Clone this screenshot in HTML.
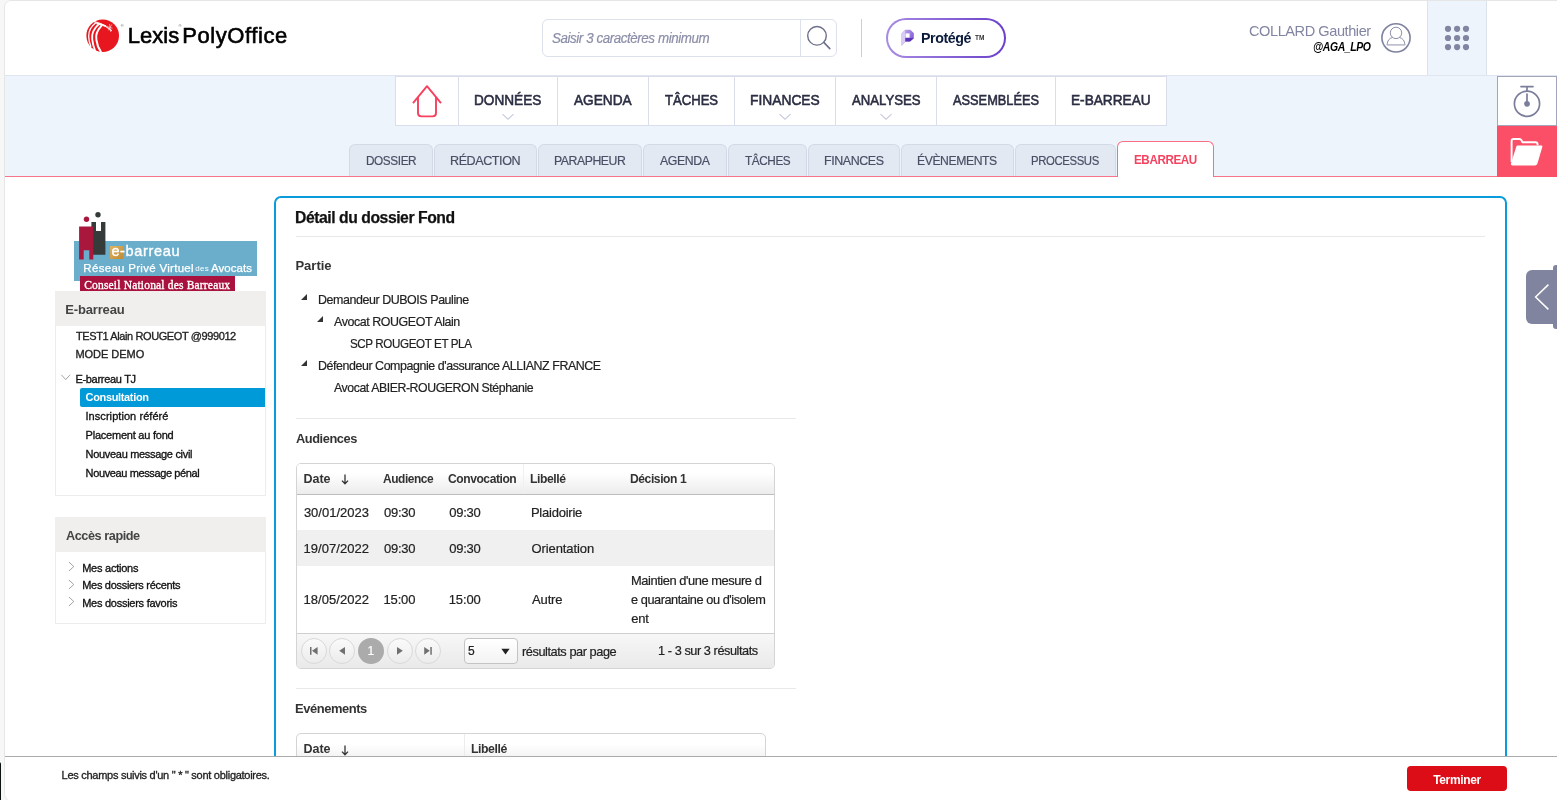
<!DOCTYPE html>
<html lang="fr"><head><meta charset="utf-8"><title>Lexis PolyOffice</title>
<style>
html,body{margin:0;padding:0;}
body{will-change:transform;width:1557px;height:800px;overflow:hidden;position:relative;background:#f7f7f7;font-family:"Liberation Sans",sans-serif;}
.a{position:absolute;box-sizing:border-box;}
.t{position:absolute;white-space:nowrap;line-height:20px;display:inline-block;transform-origin:0 50%;}
svg{position:absolute;overflow:visible;}
.tab{position:absolute;box-sizing:border-box;top:144px;height:32px;background:#e2e9f2;border:1px solid #d3dae6;border-bottom:none;border-radius:6px 6px 0 0;}
.sep{position:absolute;top:77px;width:1px;height:48px;background:#d9deea;}
.pg{position:absolute;box-sizing:border-box;width:26px;height:26px;top:638px;border-radius:13px;border:1px solid #d9d9d9;background:linear-gradient(#fafafa,#ececec);}

</style></head>
<body>
<div class="a" style="left:4px;top:0;width:1570px;height:803px;background:#fff;border:1px solid #e6e6e6;border-radius:7px 7px 7px 10px;"></div>
<div class="a" style="left:5px;top:75px;width:1552px;height:102px;background:#eef4fc;border-top:1px solid #e1e5ef;"></div>
<div class="a" style="left:5px;top:176px;width:1552px;height:1px;background:#f8748a;"></div>
<svg style="left:85px;top:18px" width="36" height="36" viewBox="0 0 36 36">
<circle cx="17.7" cy="17.7" r="16.3" fill="#e8171f"/>
<g fill="none" stroke="#fff" stroke-linecap="round">
<path d="M10.8 4.8 C6.5 8 3.6 13 3.7 18.5 C3.8 22 4.4 25 5.8 28.4" stroke-width="1.3"/>
<path d="M13.6 6.4 C9 10.5 6.6 16 7.2 21 C7.6 25.5 8.6 29 10.2 33" stroke-width="1.9"/>
<path d="M16.8 7.4 C12.5 12 10.5 18 11.4 22 C12 26.5 13.4 30.2 15.8 33.6" stroke-width="2"/>
<path d="M8.6 3.4 C13 4.6 17 6 20.4 8" stroke-width="1.1" opacity=".9"/>
<path d="M12 5.6 C15 6 18 6.8 20.4 8" stroke-width="1.6"/>
<path d="M19.6 7.6 L26.4 12.6" stroke-width="1.3" opacity=".85"/>
<path d="M24.6 6.4 L25.6 13.6 M22.4 8.6 L27.2 10.2 M26.6 6.8 L23.6 12" stroke-width="0.7" opacity=".75"/>
</g>
</svg>
<span class="t" style="left:127.70px;letter-spacing:0.060px;top:26.18px;font-size:22px;font-weight:400;color:#000;-webkit-text-stroke:0.6px #000;">Lexis</span>
<span class="t" style="left:182.20px;letter-spacing:0.580px;top:26.18px;font-size:22px;font-weight:400;color:#000;-webkit-text-stroke:0.6px #000;">PolyOffice</span>
<span class="t" style="left:120.74px;top:16.11px;font-size:4px;font-weight:400;color:#555;">®</span>
<span class="t" style="left:178.54px;top:16.11px;font-size:4px;font-weight:400;color:#555;">®</span>
<div class="a" style="left:542px;top:19px;width:295px;height:38px;border:1px solid #dde1ec;border-radius:6px;background:#fff;"></div>
<div class="a" style="left:800px;top:20px;width:1px;height:36px;background:#dde1ec;"></div>
<span class="t" style="left:552.22px;letter-spacing:-0.450px;transform:scaleX(0.9557);top:28.15px;font-size:14px;font-weight:400;color:#8b8ea8;font-style:italic;-webkit-text-stroke:0.2px #8b8ea8;">Saisir 3 caractères minimum</span>
<svg style="left:804px;top:23px" width="30" height="30" viewBox="0 0 30 30"><circle cx="13" cy="12.8" r="9.3" fill="none" stroke="#6d7089" stroke-width="1.4"/><path d="M19.8 19.4 L25.8 25.6" stroke="#6d7089" stroke-width="1.6" stroke-linecap="round"/></svg>
<div class="a" style="left:861px;top:19px;width:1px;height:38px;background:#c9cde0;"></div>
<div class="a" style="left:886px;top:18px;width:120px;height:40px;border-radius:20px;background:linear-gradient(90deg,#a78be3,#6a3fca);"></div>
<div class="a" style="left:888px;top:20px;width:116px;height:36px;border-radius:18px;background:#fff;"></div>
<svg style="left:901px;top:29px" width="14" height="18" viewBox="0 0 14 18">
<defs><linearGradient id="pg1" x1="0" y1="0" x2="1" y2="1"><stop offset="0" stop-color="#c9b3f2"/><stop offset="1" stop-color="#6a3fca"/></linearGradient></defs>
<path d="M0.5 4.2 L4.2 0.7 H9.3 L12.8 4 V9.2 L9 12.6 H4.6 L0.6 16.8 Z" fill="url(#pg1)"/>
<path d="M0.5 4.2 L4.2 0.7 V12.9 L0.6 16.8 Z" fill="#d9cbf6"/>
<path d="M4.4 9 H9 L12.8 9.2 L9 12.6 H4.4 Z" fill="#5a32b8"/>
<rect x="4.6" y="4.4" width="4" height="4.2" fill="#fff"/></svg>
<span class="t" style="left:921.25px;letter-spacing:-0.450px;transform:scaleX(0.9488);top:27.70px;font-size:15px;font-weight:700;color:#0b1b3b;">Protégé</span>
<span class="t" style="left:974.93px;letter-spacing:0.117px;top:27.65px;font-size:6.5px;font-weight:700;color:#333;">TM</span>
<span class="t" style="left:1248.86px;letter-spacing:-0.450px;transform:scaleX(0.9711);top:21.00px;font-size:15px;font-weight:400;color:#8285a1;">COLLARD Gauthier</span>
<span class="t" style="left:1313.04px;letter-spacing:-0.450px;transform:scaleX(0.8704);top:36.84px;font-size:12px;font-weight:700;color:#000;font-style:italic;">@AGA_LPO</span>
<svg style="left:1380px;top:22px" width="32" height="32" viewBox="0 0 32 32"><g fill="none" stroke="#7f829e">
<circle cx="16" cy="15.85" r="14.1" stroke-width="1.6"/>
<circle cx="16" cy="10.9" r="5.7" stroke-width="0.9"/>
<path d="M12.4 15.5 C9 16.4 7.3 18.8 7.1 22.8 M24.9 22.8 C24.7 18.8 23 16.4 19.6 15.5" stroke-width="0.9"/>
<path d="M6.8 22.9 H25.2" stroke-width="1.3" stroke="#a9abc0"/></g></svg>
<div class="a" style="left:1427px;top:1px;width:60px;height:74px;background:#eef4fc;border-left:1px solid #dde1ec;border-right:1px solid #dde1ec;"></div>
<svg style="left:0;top:0" width="1557" height="80" fill="#8285a1"><circle cx="1448" cy="28.8" r="3.1"/><circle cx="1457.1" cy="28.8" r="3.1"/><circle cx="1466" cy="28.8" r="3.1"/><circle cx="1448" cy="38" r="3.1"/><circle cx="1457.1" cy="38" r="3.1"/><circle cx="1466" cy="38" r="3.1"/><circle cx="1448" cy="47.1" r="3.1"/><circle cx="1457.1" cy="47.1" r="3.1"/><circle cx="1466" cy="47.1" r="3.1"/></svg>
<div class="a" style="left:395px;top:76px;width:772px;height:50px;background:#fff;border:1px solid #d9deea;"></div>
<div class="sep" style="left:458px"></div>
<div class="sep" style="left:557px"></div>
<div class="sep" style="left:648px"></div>
<div class="sep" style="left:734px"></div>
<div class="sep" style="left:835px"></div>
<div class="sep" style="left:936px"></div>
<div class="sep" style="left:1055px"></div>
<svg style="left:410px;top:83px" width="34" height="36" viewBox="0 0 34 36"><path d="M3 20.2 L17 3.2 L31 20.2 M8 14.4 V30 Q8 33.4 11.4 33.4 H22.6 Q26 33.4 26 30 V14.4" fill="none" stroke="#f5425f" stroke-width="1.9" stroke-linecap="butt" stroke-linejoin="round"/></svg>
<span class="t" style="left:473.68px;transform:scaleX(0.8846);top:90.46px;font-size:15.4px;font-weight:400;color:#2b2e42;-webkit-text-stroke:0.6px #2b2e42;">DONNÉES</span>
<span class="t" style="left:573.97px;transform:scaleX(0.8870);top:90.46px;font-size:15.4px;font-weight:400;color:#2b2e42;-webkit-text-stroke:0.6px #2b2e42;">AGENDA</span>
<span class="t" style="left:665.31px;transform:scaleX(0.8504);top:90.46px;font-size:15.4px;font-weight:400;color:#2b2e42;-webkit-text-stroke:0.6px #2b2e42;">TÂCHES</span>
<span class="t" style="left:749.87px;transform:scaleX(0.8964);top:90.46px;font-size:15.4px;font-weight:400;color:#2b2e42;-webkit-text-stroke:0.6px #2b2e42;">FINANCES</span>
<span class="t" style="left:851.97px;transform:scaleX(0.8566);top:90.46px;font-size:15.4px;font-weight:400;color:#2b2e42;-webkit-text-stroke:0.6px #2b2e42;">ANALYSES</span>
<span class="t" style="left:953.47px;transform:scaleX(0.8319);top:90.46px;font-size:15.4px;font-weight:400;color:#2b2e42;-webkit-text-stroke:0.6px #2b2e42;">ASSEMBLÉES</span>
<span class="t" style="left:1071.38px;transform:scaleX(0.8873);top:90.46px;font-size:15.4px;font-weight:400;color:#2b2e42;-webkit-text-stroke:0.6px #2b2e42;">E-BARREAU</span>
<svg style="left:500.5px;top:113px" width="14" height="8" viewBox="0 0 14 8"><path d="M1.5 1.2 L7 6.2 L12.5 1.2" fill="none" stroke="#c6cadd" stroke-width="1.1"/></svg>
<svg style="left:777.5px;top:113px" width="14" height="8" viewBox="0 0 14 8"><path d="M1.5 1.2 L7 6.2 L12.5 1.2" fill="none" stroke="#c6cadd" stroke-width="1.1"/></svg>
<svg style="left:878.5px;top:113px" width="14" height="8" viewBox="0 0 14 8"><path d="M1.5 1.2 L7 6.2 L12.5 1.2" fill="none" stroke="#c6cadd" stroke-width="1.1"/></svg>
<div class="tab" style="left:349px;width:84px"></div>
<span class="t" style="left:365.63px;letter-spacing:-0.450px;transform:scaleX(0.9068);top:150.80px;font-size:13px;font-weight:400;color:#4b4e65;-webkit-text-stroke:0.2px #4b4e65;">DOSSIER</span>
<div class="tab" style="left:434px;width:103px"></div>
<span class="t" style="left:450.27px;letter-spacing:-0.450px;transform:scaleX(0.9670);top:150.80px;font-size:13px;font-weight:400;color:#4b4e65;-webkit-text-stroke:0.2px #4b4e65;">RÉDACTION</span>
<div class="tab" style="left:538px;width:104px"></div>
<span class="t" style="left:554.00px;letter-spacing:-0.450px;transform:scaleX(0.9413);top:150.80px;font-size:13px;font-weight:400;color:#4b4e65;-webkit-text-stroke:0.2px #4b4e65;">PARAPHEUR</span>
<div class="tab" style="left:643px;width:84px"></div>
<span class="t" style="left:660.18px;letter-spacing:-0.450px;transform:scaleX(0.9467);top:150.80px;font-size:13px;font-weight:400;color:#4b4e65;-webkit-text-stroke:0.2px #4b4e65;">AGENDA</span>
<div class="tab" style="left:728px;width:79px"></div>
<span class="t" style="left:744.94px;letter-spacing:-0.450px;transform:scaleX(0.9053);top:150.80px;font-size:13px;font-weight:400;color:#4b4e65;-webkit-text-stroke:0.2px #4b4e65;">TÂCHES</span>
<div class="tab" style="left:808px;width:92px"></div>
<span class="t" style="left:823.78px;letter-spacing:-0.450px;transform:scaleX(0.9586);top:150.80px;font-size:13px;font-weight:400;color:#4b4e65;-webkit-text-stroke:0.2px #4b4e65;">FINANCES</span>
<div class="tab" style="left:901px;width:113px"></div>
<span class="t" style="left:917.20px;letter-spacing:-0.450px;transform:scaleX(0.9372);top:150.80px;font-size:13px;font-weight:400;color:#4b4e65;-webkit-text-stroke:0.2px #4b4e65;">ÉVÈNEMENTS</span>
<div class="tab" style="left:1015px;width:101px"></div>
<span class="t" style="left:1031.07px;letter-spacing:-0.450px;transform:scaleX(0.8746);top:150.80px;font-size:13px;font-weight:400;color:#4b4e65;-webkit-text-stroke:0.2px #4b4e65;">PROCESSUS</span>
<div class="a" style="left:1117px;top:141px;width:97px;height:36px;background:#fff;border:1px solid #fa6e84;border-bottom:none;border-radius:6px 6px 0 0;"></div>
<span class="t" style="left:1134.02px;letter-spacing:-0.450px;transform:scaleX(0.9350);top:149.67px;font-size:12.5px;font-weight:700;color:#f5425f;">EBARREAU</span>
<div class="a" style="left:1497px;top:76px;width:60px;height:50px;background:#fff;border:1px solid #a3a6bb;"></div>
<svg style="left:1510px;top:82.7px" width="34" height="38" viewBox="0 0 34 38"><g fill="none" stroke="#7b7e9a" stroke-width="1.7" stroke-linecap="round">
<circle cx="17" cy="20.8" r="12.6"/><path d="M11 3.6 H23 M17 3.6 V8 M17 11 V20"/></g><circle cx="17" cy="20.8" r="2.9" fill="#7b7e9a"/></svg>
<div class="a" style="left:1497px;top:126px;width:60px;height:51px;background:#fb4f68;"></div>
<svg style="left:1509px;top:136px" width="36" height="32" viewBox="0 0 36 32"><g fill="#fff" stroke="#fff" stroke-linejoin="round">
<path d="M2.6 26 V5 Q2.6 3 4.6 3 H10.4 Q11.8 3 12.4 4.2 L13.4 6.2 H26.4 Q28.6 6.2 28.6 8.4 V9.2" fill="none" stroke-width="1.9"/>
<path d="M8.2 10.4 H32.6 L27.6 27.4 Q27.2 28.6 26 28.6 H3.6 Q2.4 28.6 2.8 27.4 Z" stroke-width="1.6"/></g></svg>
<div class="a" style="left:74px;top:241px;width:182.5px;height:35px;background:#6baecb;"></div>
<div class="a" style="left:74px;top:270px;width:8px;height:10.5px;background:#6baecb;"></div>
<div class="a" style="left:80.3px;top:276px;width:155px;height:15px;background:#a9123f;"></div>
<svg style="left:70px;top:208px" width="45" height="56" viewBox="0 0 45 56">
<circle cx="28" cy="6.8" r="2.7" fill="#353b3b"/>
<path d="M21.4 14 H26 V23 H31 V14 H35.4 V46.7 H21.4 Z" fill="#353b3b"/>
<circle cx="16.5" cy="11.2" r="2.7" fill="#a9173d"/>
<path d="M9.1 18.6 H23.3 V51.5 H19.3 V42.3 H13.7 V51.5 H9.1 Z" fill="#a9173d"/></svg>
<div class="a" style="left:109.8px;top:246px;width:13.6px;height:13px;background:linear-gradient(135deg,#e0b565,#c08a33);"></div>
<span class="t" style="left:111.38px;letter-spacing:0.650px;top:241.18px;font-size:14.5px;font-weight:400;color:#fff;-webkit-text-stroke:0.35px #fff;">e-barreau</span>
<span class="t" style="left:83.36px;letter-spacing:0.294px;top:257.62px;font-size:11.5px;font-weight:400;color:#fff;-webkit-text-stroke:0.25px #fff;">Réseau Privé Virtuel</span>
<span class="t" style="left:195.16px;letter-spacing:0.359px;top:258.83px;font-size:8px;font-weight:400;color:#fff;">des</span>
<span class="t" style="left:210.98px;letter-spacing:0.056px;top:257.62px;font-size:11.5px;font-weight:400;color:#fff;-webkit-text-stroke:0.25px #fff;">Avocats</span>
<span class="t" style="left:84.23px;letter-spacing:0.181px;top:274.62px;font-size:11.5px;font-weight:400;color:#fff;font-family:'Liberation Serif',serif;-webkit-text-stroke:0.35px #fff;">Conseil National des Barreaux</span>
<div class="a" style="left:55px;top:291px;width:211px;height:205px;border:1px solid #ececec;border-top:none;"></div>
<div class="a" style="left:55px;top:291px;width:211px;height:35px;background:#f0efee;"></div>
<span class="t" style="left:65.33px;letter-spacing:-0.172px;top:299.70px;font-size:13px;font-weight:700;color:#444;">E-barreau</span>
<span class="t" style="left:76.05px;letter-spacing:-0.398px;top:325.99px;font-size:11px;font-weight:400;color:#222;-webkit-text-stroke:0.32px #222;">TEST1 Alain ROUGEOT @999012</span>
<span class="t" style="left:75.40px;letter-spacing:-0.017px;top:343.99px;font-size:11px;font-weight:400;color:#222;-webkit-text-stroke:0.32px #222;">MODE DEMO</span>
<svg style="left:60px;top:373px" width="12" height="8" viewBox="0 0 12 8"><path d="M1.4 1.8 L5.7 6.6 L10 1.8" fill="none" stroke="#999" stroke-width="0.9"/></svg>
<span class="t" style="left:75.40px;letter-spacing:-0.298px;top:368.69px;font-size:11px;font-weight:400;color:#111;-webkit-text-stroke:0.32px #111;">E-barreau TJ</span>
<div class="a" style="left:80px;top:388px;width:185px;height:19px;background:#009ad9;border-radius:2px 0 0 2px;"></div>
<span class="t" style="left:85.55px;letter-spacing:-0.344px;top:386.69px;font-size:11px;font-weight:700;color:#fff;">Consultation</span>
<span class="t" style="left:85.48px;letter-spacing:0.063px;top:405.69px;font-size:11px;font-weight:400;color:#111;-webkit-text-stroke:0.32px #111;">Inscription référé</span>
<span class="t" style="left:85.60px;letter-spacing:-0.226px;top:424.79px;font-size:11px;font-weight:400;color:#111;-webkit-text-stroke:0.32px #111;">Placement au fond</span>
<span class="t" style="left:85.60px;letter-spacing:-0.309px;top:443.89px;font-size:11px;font-weight:400;color:#111;-webkit-text-stroke:0.32px #111;">Nouveau message civil</span>
<span class="t" style="left:85.60px;letter-spacing:-0.378px;top:462.79px;font-size:11px;font-weight:400;color:#111;-webkit-text-stroke:0.32px #111;">Nouveau message pénal</span>
<div class="a" style="left:55px;top:517px;width:211px;height:107px;border:1px solid #ececec;border-top:none;"></div>
<div class="a" style="left:55px;top:517px;width:211px;height:35px;background:#f0efee;"></div>
<span class="t" style="left:65.88px;letter-spacing:-0.450px;transform:scaleX(0.9758);top:525.90px;font-size:13px;font-weight:700;color:#444;">Accès rapide</span>
<span class="t" style="left:82.20px;letter-spacing:-0.240px;top:557.69px;font-size:11px;font-weight:400;color:#111;-webkit-text-stroke:0.32px #111;">Mes actions</span>
<svg style="left:67px;top:561.2px" width="9" height="11" viewBox="0 0 9 11"><path d="M1.9 1 L6.8 5.5 L1.9 10" fill="none" stroke="#999" stroke-width="0.9"/></svg>
<span class="t" style="left:82.20px;letter-spacing:-0.291px;top:574.79px;font-size:11px;font-weight:400;color:#111;-webkit-text-stroke:0.32px #111;">Mes dossiers récents</span>
<svg style="left:67px;top:578.9px" width="9" height="11" viewBox="0 0 9 11"><path d="M1.9 1 L6.8 5.5 L1.9 10" fill="none" stroke="#999" stroke-width="0.9"/></svg>
<span class="t" style="left:82.20px;letter-spacing:-0.261px;top:593.19px;font-size:11px;font-weight:400;color:#111;-webkit-text-stroke:0.32px #111;">Mes dossiers favoris</span>
<svg style="left:67px;top:596.3px" width="9" height="11" viewBox="0 0 9 11"><path d="M1.9 1 L6.8 5.5 L1.9 10" fill="none" stroke="#999" stroke-width="0.9"/></svg>
<div class="a" style="left:274px;top:196px;width:1233px;height:640px;border:2px solid #0a9bdc;border-radius:7px;background:#fff;"></div>
<span class="t" style="left:295.25px;letter-spacing:-0.450px;transform:scaleX(0.9820);top:208.46px;font-size:16px;font-weight:700;color:#111;-webkit-text-stroke:0.25px #111;">Détail du dossier Fond</span>
<div class="a" style="left:296px;top:236px;width:1189px;height:1px;background:#e9e9e9;"></div>
<span class="t" style="left:295.43px;top:256.00px;font-size:13px;font-weight:700;color:#333;">Partie</span>
<span class="t" style="left:317.98px;letter-spacing:-0.450px;transform:scaleX(0.9567);top:289.60px;font-size:13px;font-weight:400;color:#222;-webkit-text-stroke:0.2px #222;">Demandeur DUBOIS Pauline</span>
<svg style="left:301.2px;top:294.40000000000003px" width="6" height="6" viewBox="0 0 6 6"><path d="M6 0 V6 H0 Z" fill="#333"/></svg>
<span class="t" style="left:334.28px;letter-spacing:-0.450px;transform:scaleX(0.9572);top:311.60px;font-size:13px;font-weight:400;color:#222;-webkit-text-stroke:0.2px #222;">Avocat ROUGEOT Alain</span>
<svg style="left:317.4px;top:316.40000000000003px" width="6" height="6" viewBox="0 0 6 6"><path d="M6 0 V6 H0 Z" fill="#333"/></svg>
<span class="t" style="left:349.67px;letter-spacing:-0.450px;transform:scaleX(0.8958);top:333.50px;font-size:13px;font-weight:400;color:#222;-webkit-text-stroke:0.2px #222;">SCP ROUGEOT ET PLA</span>
<span class="t" style="left:317.98px;letter-spacing:-0.450px;transform:scaleX(0.9548);top:355.50px;font-size:13px;font-weight:400;color:#222;-webkit-text-stroke:0.2px #222;">Défendeur Compagnie d'assurance ALLIANZ FRANCE</span>
<svg style="left:301.2px;top:360.3px" width="6" height="6" viewBox="0 0 6 6"><path d="M6 0 V6 H0 Z" fill="#333"/></svg>
<span class="t" style="left:334.28px;letter-spacing:-0.450px;transform:scaleX(0.9460);top:377.70px;font-size:13px;font-weight:400;color:#222;-webkit-text-stroke:0.2px #222;">Avocat ABIER-ROUGERON Stéphanie</span>
<div class="a" style="left:296px;top:418px;width:500px;height:1px;background:#e9e9e9;"></div>
<span class="t" style="left:295.98px;letter-spacing:-0.450px;transform:scaleX(0.9871);top:428.60px;font-size:13px;font-weight:700;color:#333;">Audiences</span>
<div class="a" style="left:296px;top:463px;width:479px;height:206px;border:1px solid #d4d4d4;border-radius:5px;background:#fff;overflow:hidden;"><div class="a" style="left:0;top:0;width:477px;height:31px;background:linear-gradient(#fff 30%,#ececec);border-bottom:1px solid #bdbdbd;"></div><div class="a" style="left:0;top:66px;width:477px;height:36px;background:#f0f0f0;"></div><div class="a" style="left:0;top:169px;width:477px;height:36px;background:linear-gradient(#f7f7f7,#e9e9e9);border-top:1px solid #cfcfcf;"></div></div>
<div class="a" style="left:523px;top:464px;width:1px;height:30px;background:#f0f0f0;"></div>
<span class="t" style="left:303.56px;letter-spacing:-0.043px;top:469.17px;font-size:12.5px;font-weight:700;color:#333;">Date</span>
<svg style="left:341px;top:473.5px" width="8" height="11" viewBox="0 0 8 11"><path d="M4 0.5 V9.6 M1 6.6 L4 9.8 L7 6.6" fill="none" stroke="#333" stroke-width="1.3"/></svg>
<span class="t" style="left:383.20px;letter-spacing:-0.450px;transform:scaleX(0.9546);top:469.17px;font-size:12.5px;font-weight:700;color:#333;">Audience</span>
<span class="t" style="left:448.21px;letter-spacing:-0.450px;transform:scaleX(0.9655);top:469.17px;font-size:12.5px;font-weight:700;color:#333;">Convocation</span>
<span class="t" style="left:530.19px;letter-spacing:-0.450px;transform:scaleX(0.9739);top:469.17px;font-size:12.5px;font-weight:700;color:#333;">Libellé</span>
<span class="t" style="left:629.89px;letter-spacing:-0.450px;transform:scaleX(0.9686);top:469.17px;font-size:12.5px;font-weight:700;color:#333;">Décision 1</span>
<span class="t" style="left:303.90px;top:502.50px;font-size:13px;font-weight:400;color:#222;-webkit-text-stroke:0.2px #222;">30/01/2023</span>
<span class="t" style="left:383.99px;letter-spacing:-0.283px;top:502.50px;font-size:13px;font-weight:400;color:#222;-webkit-text-stroke:0.2px #222;">09:30</span>
<span class="t" style="left:449.19px;letter-spacing:-0.233px;top:502.50px;font-size:13px;font-weight:400;color:#222;-webkit-text-stroke:0.2px #222;">09:30</span>
<span class="t" style="left:530.93px;letter-spacing:-0.227px;top:502.50px;font-size:13px;font-weight:400;color:#222;-webkit-text-stroke:0.2px #222;">Plaidoirie</span>
<span class="t" style="left:303.41px;letter-spacing:0.063px;top:538.50px;font-size:13px;font-weight:400;color:#222;-webkit-text-stroke:0.2px #222;">19/07/2022</span>
<span class="t" style="left:383.99px;letter-spacing:-0.283px;top:538.50px;font-size:13px;font-weight:400;color:#222;-webkit-text-stroke:0.2px #222;">09:30</span>
<span class="t" style="left:449.19px;letter-spacing:-0.233px;top:538.50px;font-size:13px;font-weight:400;color:#222;-webkit-text-stroke:0.2px #222;">09:30</span>
<span class="t" style="left:531.38px;letter-spacing:-0.073px;top:538.50px;font-size:13px;font-weight:400;color:#222;-webkit-text-stroke:0.2px #222;">Orientation</span>
<span class="t" style="left:303.41px;letter-spacing:0.063px;top:590.00px;font-size:13px;font-weight:400;color:#222;-webkit-text-stroke:0.2px #222;">18/05/2022</span>
<span class="t" style="left:383.51px;letter-spacing:-0.162px;top:590.00px;font-size:13px;font-weight:400;color:#222;-webkit-text-stroke:0.2px #222;">15:00</span>
<span class="t" style="left:448.71px;letter-spacing:-0.112px;top:590.00px;font-size:13px;font-weight:400;color:#222;-webkit-text-stroke:0.2px #222;">15:00</span>
<span class="t" style="left:531.97px;letter-spacing:-0.119px;top:590.00px;font-size:13px;font-weight:400;color:#222;-webkit-text-stroke:0.2px #222;">Autre</span>
<span class="t" style="left:630.74px;letter-spacing:-0.450px;transform:scaleX(0.9912);top:570.80px;font-size:13px;font-weight:400;color:#222;-webkit-text-stroke:0.2px #222;">Maintien d'une mesure d</span>
<span class="t" style="left:631.26px;letter-spacing:-0.450px;transform:scaleX(0.9796);top:589.90px;font-size:13px;font-weight:400;color:#222;-webkit-text-stroke:0.2px #222;">e quarantaine ou d'isolem</span>
<span class="t" style="left:631.25px;letter-spacing:-0.215px;top:609.00px;font-size:13px;font-weight:400;color:#222;-webkit-text-stroke:0.2px #222;">ent</span>
<div class="pg" style="left:300.9px"></div>
<div class="pg" style="left:329.1px"></div>
<div class="pg" style="left:386.8px"></div>
<div class="pg" style="left:415.1px"></div>
<div class="a" style="left:357.9px;top:638px;width:26px;height:26px;border-radius:13px;background:#ababab;"></div>
<span class="t" style="left:367.49px;top:640.84px;font-size:12px;font-weight:400;color:#fff;-webkit-text-stroke:0.2px #fff;">1</span>
<svg style="left:0;top:0" width="800" height="700" fill="#707070"><path d="M310 646.9 h1.5 v7.8 h-1.5 z M317.6 646.9 v7.8 l-5.6 -3.9 z"/><path d="M345 646.9 v7.8 l-5.8 -3.9 z"/><path d="M397 646.9 v7.8 l5.8 -3.9 z"/><path d="M424.2 646.9 v7.8 l5.6 -3.9 z M430.3 646.9 h1.5 v7.8 h-1.5 z"/></svg>
<div class="a" style="left:464px;top:638px;width:54px;height:26px;border:1px solid #c4c4c4;border-radius:4px;background:linear-gradient(#fff,#f3f3f3);"></div>
<svg style="left:0;top:0" width="800" height="700"><path d="M501.4 648.7 h8.2 l-4.1 5.7 z" fill="#222"/></svg>
<span class="t" style="left:468.12px;top:640.74px;font-size:12px;font-weight:400;color:#222;-webkit-text-stroke:0.2px #222;">5</span>
<span class="t" style="left:521.65px;letter-spacing:-0.450px;transform:scaleX(0.9822);top:641.60px;font-size:13px;font-weight:400;color:#222;-webkit-text-stroke:0.2px #222;">résultats par page</span>
<span class="t" style="left:657.53px;letter-spacing:-0.450px;transform:scaleX(0.9800);top:640.60px;font-size:13px;font-weight:400;color:#222;-webkit-text-stroke:0.2px #222;">1 - 3 sur 3 résultats</span>
<div class="a" style="left:296px;top:688px;width:500px;height:1px;background:#e9e9e9;"></div>
<span class="t" style="left:295.43px;letter-spacing:-0.450px;transform:scaleX(0.9952);top:699.20px;font-size:13px;font-weight:700;color:#333;">Evénements</span>
<div class="a" style="left:296px;top:733px;width:470px;height:60px;border:1px solid #d4d4d4;border-radius:5px;background:linear-gradient(#fff 10px,#ececec 31px);"></div>
<div class="a" style="left:464px;top:734px;width:1px;height:30px;background:#ececec;"></div>
<span class="t" style="left:303.56px;letter-spacing:-0.043px;top:738.67px;font-size:12.5px;font-weight:700;color:#333;">Date</span>
<svg style="left:341px;top:744.5px" width="8" height="11" viewBox="0 0 8 11"><path d="M4 0.5 V9.6 M1 6.6 L4 9.8 L7 6.6" fill="none" stroke="#333" stroke-width="1.3"/></svg>
<span class="t" style="left:471.38px;letter-spacing:-0.450px;transform:scaleX(0.9823);top:738.67px;font-size:12.5px;font-weight:700;color:#333;">Libellé</span>
<div class="a" style="left:1526px;top:270px;width:40px;height:54px;background:#81849e;border-radius:6px;"></div>
<div class="a" style="left:1553px;top:265px;width:10px;height:64px;background:#81849e;border-radius:3px;"></div>
<svg style="left:1532px;top:282px" width="20" height="30" viewBox="0 0 20 30"><path d="M16.4 2.6 L3.6 15 L16.4 27.4" fill="none" stroke="#fff" stroke-width="1.5"/></svg>
<div class="a" style="left:5px;top:756px;width:1552px;height:46px;background:#fff;border-top:1px solid #ababab;border-radius:0 0 0 9px;"></div>
<span class="t" style="left:61.60px;letter-spacing:-0.273px;top:764.69px;font-size:11px;font-weight:400;color:#222;-webkit-text-stroke:0.32px #222;">Les champs suivis d'un " * " sont obligatoires.</span>
<div class="a" style="left:1407px;top:766px;width:100px;height:25px;background:#dc0d16;border-radius:4px;"></div>
<span class="t" style="left:1433.17px;letter-spacing:-0.350px;top:769.64px;font-size:12px;font-weight:700;color:#fff;">Terminer</span>
<div class="a" style="left:-9.6px;top:762px;width:10.5px;height:60px;background:#0c1210;border-radius:0 2px 0 0;"></div>
</body></html>
